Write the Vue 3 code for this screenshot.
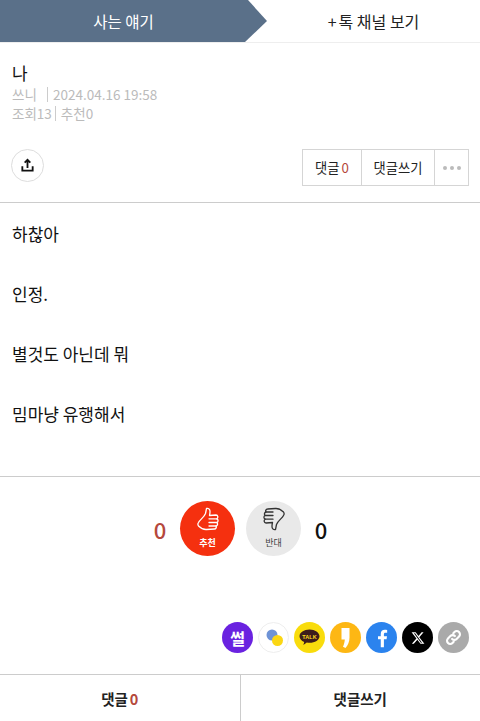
<template>
  <div class="page">
    <nav class="tabs">
      <a class="tab-main">사는 얘기</a>
      <a class="tab-other"><span class="plus">+</span>톡 채널 보기</a>
    </nav>

    <header class="head">
      <h1 class="title">나</h1>
      <div class="meta"><span class="writer">쓰니</span><i class="sep wide"></i><span>2024.04.16 19:58</span></div>
      <div class="meta"><span>조회13</span><i class="sep"></i><span>추천0</span></div>
    </header>

    <div class="actions">
      <button class="share-btn" aria-label="공유">
        <svg width="15" height="15" viewBox="0 0 18 18" fill="none" stroke="#111" stroke-width="2.200">
          <path d="M9 12V2.500M5.600 5.600 9 2.200l3.400 3.400" />
          <path d="M2.800 10v5.200h12.400V10" />
        </svg>
      </button>
      <div class="btn-group">
        <button class="cmt">댓글<em>0</em></button>
        <button class="write">댓글쓰기</button>
        <button class="more"><b></b><b></b><b></b></button>
      </div>
    </div>

    <article class="body">
      <p v-for="line in lines" :key="line">{{ line }}</p>
    </article>

    <section class="votes">
      <span class="count up">0</span>
      <button class="vote red">
        <svg width="22" height="24" viewBox="0 0 22 24" fill="none" stroke="#fff" stroke-width="1.300" stroke-linejoin="round" stroke-linecap="round">
          <path :d="thumbHand" />
          <path :d="thumbFingers" />
        </svg>
        <span>추천</span>
      </button>
      <button class="vote gray">
        <svg width="22" height="24" viewBox="0 0 22 24" fill="none" stroke="#333" stroke-width="1.300" stroke-linejoin="round" stroke-linecap="round">
          <g transform="rotate(180 11 12)">
            <path :d="thumbHand" />
            <path :d="thumbFingers" />
          </g>
        </svg>
        <span>반대</span>
      </button>
      <span class="count">0</span>
    </section>

    <div class="sns">
      <span class="sns-icon ssul">썰</span>
      <span class="sns-icon band">
        <svg width="26" height="26" viewBox="0 0 26 26"><circle cx="11" cy="10" r="5.500" fill="#6e93d6" /><circle cx="16.500" cy="15.500" r="5.500" fill="#fbd714" /></svg>
      </span>
      <span class="sns-icon kakao">
        <svg width="21" height="17" viewBox="0 0 21 17"><path d="M10.500 .5C5 .5.500 3.500.500 7.200c0 2.400 1.900 4.500 4.700 5.700l-.8 3 3.400-2.300c.9.200 1.800.2 2.700.2 5.500 0 10-3 10-6.600S16 .5 10.500 .5Z" fill="#3d1d1c" /><text x="10.500" y="9.500" text-anchor="middle" class="talk">TALK</text></svg>
      </span>
      <span class="sns-icon story">
        <svg width="9" height="20" viewBox="0 0 9 20"><path d="M.5 0h8v9.500c0 4-1.500 7.800-4 10.500L2 18.800c1-2.300 1.600-4.500 1.800-7.300H.5Z" fill="#fff" /></svg>
      </span>
      <span class="sns-icon fb">
        <svg width="14" height="20" viewBox="0 0 16 24"><path d="M10.300 23V13.500h3.200l.5-3.700h-3.700V7.500c0-1.100.3-1.800 1.900-1.800h2V2.400c-.4 0-1.500-.2-2.900-.2-2.900 0-4.800 1.700-4.800 4.900v2.700H3.200v3.700h3.300V23Z" fill="#fff" /></svg>
      </span>
      <span class="sns-icon x">
        <svg width="14" height="14" viewBox="0 0 24 24"><path d="M18.200 2h3.400l-7.400 8.500L23 22h-6.800l-5.300-7-6.100 7H1.400l7.900-9.100L1 2h7l4.800 6.400Zm-1.200 18h1.900L7 3.900H5Z" fill="#fff" /></svg>
      </span>
      <span class="sns-icon link">
        <svg width="17" height="17" viewBox="0 0 24 24" fill="none" stroke="#fff" stroke-width="3" stroke-linecap="round">
          <path d="M10 14a4.500 4.500 0 0 0 6.400 0l3.400-3.400a4.500 4.500 0 0 0-6.400-6.400L11.700 5.900" />
          <path d="M14 10a4.500 4.500 0 0 0-6.400 0l-3.400 3.400a4.500 4.500 0 0 0 6.400 6.400l1.700-1.700" />
        </svg>
      </span>
    </div>

    <footer class="bottom">
      <button>댓글<em>0</em></button>
      <button>댓글쓰기</button>
    </footer>
  </div>
</template>

<script setup>
const lines = ['하찮아', '인정.', '별것도 아닌데 뭐', '밈마냥 유행해서']

// thumb drawn once, the dislike button rotates it
const thumbHand = 'M1.500 15.500C3 12.500 7 10.500 8.500 6.500L9.500 1.500C12.500.8 13.800 3 12.500 8.500L19 8C21 8 21.500 10.800 19.800 11.800C21.500 12.300 21.500 15 19.800 15.500C21 16.300 20.800 18.500 19 19C19.800 20 19 22 17.500 22L9.500 22.500C6.500 22.700 3.500 21 1.500 19C.8 18 .8 16.500 1.500 15.500Z'
const thumbFingers = 'M12 11.800H19.800M12 15.500H19.800M12 19H19'
</script>

<style>
body {
  margin: 0;
  background: #fff;
}
</style>

<style scoped>
.page {
  width: 480px;
  height: 721px;
  overflow: hidden;
  font-family: "Noto Sans CJK KR", "Noto Sans", sans-serif;
  color: #111;
  display: flex;
  flex-direction: column;
}

button {
  font-family: inherit;
  background: none;
  border: none;
  padding: 0;
  color: inherit;
}

em {
  font-style: normal;
  color: #b5483c;
  margin-left: 2px;
}

.tabs {
  height: 42px;
  display: flex;
  border-bottom: 1px solid #eee;
  flex-shrink: 0;
}

.tab-main {
  width: 267px;
  height: 42px;
  padding-right: 20px;
  box-sizing: border-box;
  background: #5a7089;
  color: #fff;
  font-size: 15.5px;
  display: flex;
  align-items: center;
  justify-content: center;
  clip-path: polygon(0 0, 248px 0, 267px 21px, 245px 42px, 0 42px);
}

.tab-other {
  flex: 1;
  display: flex;
  align-items: center;
  justify-content: center;
  font-size: 16px;
  color: #222;
}

.plus {
  margin-right: 2px;
}

.head {
  padding: 19px 12px 0;
}

.title {
  margin: 0 0 1px;
  font-size: 17px;
  font-weight: 400;
  line-height: 22px;
}

.meta {
  font-size: 13.5px;
  line-height: 19px;
  color: #bbb;
  display: flex;
  align-items: center;
}

.writer {
  width: 24px;
  white-space: nowrap;
}

.sep {
  width: 1px;
  height: 15px;
  background: #ccc;
  margin: 0 5px 0 3px;
}

.sep.wide {
  margin-left: 11px;
  margin-right: 5px;
}

.actions {
  margin-top: 26px;
  padding: 0 11px;
  height: 53px;
  display: flex;
  justify-content: space-between;
  border-bottom: 1px solid #ccc;
}

.share-btn {
  width: 33px;
  height: 33px;
  border: 1px solid #ddd;
  border-radius: 50%;
  display: flex;
  align-items: center;
  justify-content: center;
}

.btn-group {
  display: flex;
  height: 35px;
  border: 1px solid #d5d5d5;
}

.btn-group button {
  font-size: 13.300px;
  color: #222;
  border-right: 1px solid #d5d5d5;
}

.cmt {
  width: 59px;
}

.write {
  width: 73px;
}

.btn-group .more {
  width: 33px;
  border-right: none;
  display: flex;
  align-items: center;
  justify-content: center;
  gap: 3px;
}

.more b {
  width: 4px;
  height: 4px;
  border-radius: 50%;
  background: #bbb;
}

.body {
  height: 274px;
  padding: 16px 12px 0;
  box-sizing: border-box;
  border-bottom: 1px solid #ccc;
  flex-shrink: 0;
}

.body p {
  margin: 0 0 30px;
  font-size: 17px;
  line-height: 30px;
  color: #111;
}

.votes {
  margin-top: 24px;
  display: flex;
  justify-content: center;
  align-items: center;
  gap: 11px;
  padding-left: 1px;
}

.count {
  font-size: 22px;
  font-weight: 500;
  width: 18px;
  text-align: center;
}

.count.up {
  color: #b5483c;
}

.vote {
  width: 55px;
  height: 55px;
  border-radius: 50%;
  display: flex;
  flex-direction: column;
  align-items: center;
  font-size: 9px;
  line-height: 10px;
  padding-top: 6px;
  box-sizing: border-box;
}

.vote svg {
  flex-shrink: 0;
  margin-bottom: 7px;
}

.red {
  background: #f5300f;
  color: #fff;
  font-weight: 700;
}

.gray {
  background: #e9e9e9;
  color: #444;
}

.sns {
  margin-top: 66px;
  padding-right: 11px;
  display: flex;
  justify-content: flex-end;
  gap: 5px;
}

.sns-icon {
  width: 31px;
  height: 31px;
  border-radius: 50%;
  display: flex;
  align-items: center;
  justify-content: center;
  overflow: hidden;
  box-sizing: border-box;
}

.ssul {
  background: #6a22e0;
  color: #fff;
  font-size: 16px;
  font-weight: 700;
}

.band {
  background: #fff;
  border: 1px solid #eee;
}

.kakao {
  background: #f9dc0c;
}

.talk {
  font-size: 5.500px;
  font-weight: 700;
  fill: #fbdc1e;
  font-family: "Liberation Sans", sans-serif;
}

.story {
  background: #fdb714;
}

.fb {
  background: #2b83ee;
}

.x {
  background: #000;
}

.link {
  background: #aaa;
}

.bottom {
  margin-top: auto;
  height: 46px;
  flex-shrink: 0;
  display: flex;
  border-top: 1px solid #ccc;
}

.bottom button {
  flex: 1;
  font-size: 14.500px;
  font-weight: 700;
  color: #222;
}

.bottom button:first-child {
  border-right: 1px solid #ccc;
}
</style>
